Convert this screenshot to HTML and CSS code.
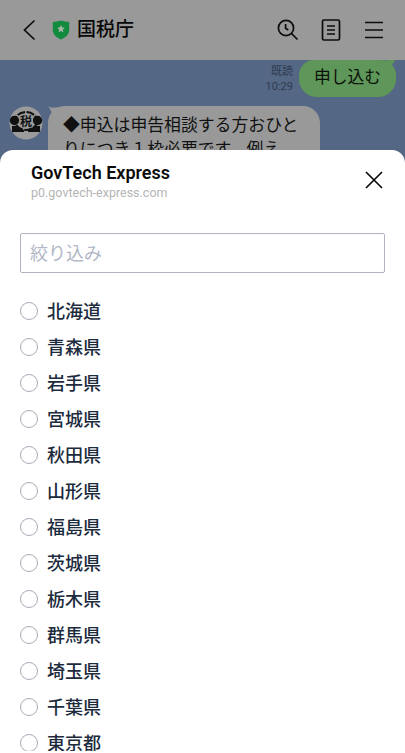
FILE: index.html
```html
<!DOCTYPE html>
<html lang="ja">
<head>
<meta charset="utf-8">
<title>GovTech Express</title>
<link rel="stylesheet" href="styles.css">
</head>
<body>
<div class="app">
  <header class="topbar">
    <svg class="back" width="14" height="22" viewBox="0 0 14 22"><path d="M11.500 1.500 1.500 11l10 9.500"/></svg>
    <svg class="shield" width="18" height="20" viewBox="0 0 18 20"><path class="shield-body" d="M9 .6C6.500 1.500 3.500 2 .8 2v8c0 4.500 3.500 7.500 8.200 9.400 4.700-1.900 8.200-4.900 8.200-9.400V2C14.500 2 11.500 1.500 9 .6z"/><path class="shield-star" d="m9 4.900 1.150 2.500 2.750.3-2.050 1.850.55 2.700L9 10.900l-2.400 1.350.55-2.700L5.100 7.700l2.750-.3z"/></svg>
    <h1 class="title">国税庁</h1>
    <nav class="actions">
      <svg width="22" height="22" viewBox="0 0 22 22"><circle cx="9" cy="9" r="7.600"/><path d="m14.500 14.500 6 6M8.600 5v4.300l2.700 1.700"/></svg>
      <svg width="20" height="22" viewBox="0 0 20 22"><rect x="1.500" y="1" width="17" height="20" rx="1.500"/><path d="M6 7h8M6 11h8M6 15h8"/></svg>
      <svg width="20" height="22" viewBox="0 0 20 22"><path d="M1 3.500h18M1 11h18M1 18.500h18"/></svg>
    </nav>
  </header>
  <main class="chat">
    <div class="sent">
      <div class="meta"><span>既読</span><span>10:29</span></div>
      <div class="bubble-out">申し込む<svg class="out-tail" width="10" height="6" viewBox="0 0 10 6"><path d="M0 0h9C8 3 6 5 4 6z"/></svg></div>
    </div>
    <div class="received">
      <svg class="avatar" width="34" height="34" viewBox="0 0 34 34"><circle class="avatar-bg" cx="17" cy="17" r="16.500"/><ellipse class="ring" cx="17" cy="15" rx="11" ry="9"/><circle cx="5.500" cy="14.500" r="4.700"/><circle cx="28.500" cy="14.500" r="4.700"/><path d="M3 20h5l7 4v2H3zM31 20h-5l-7 4v2h12z"/><circle class="avatar-bg" cx="17" cy="15.500" r="6.900"/><text x="17" y="19.500">税</text></svg>
      <div class="bubble-in"><svg class="in-tail" width="12" height="12" viewBox="0 0 12 12"><path d="M0 0c2 2 5 2 12 1L5 12C4 7 3 4 0 0z"/></svg>◆申込は申告相談する方おひと<br>りにつき１枠必要です。例え</div>
    </div>
  </main>
  <section class="sheet">
    <div class="sheet-head">
      <div>
        <h2>GovTech Express</h2>
        <p>p0.govtech-express.com</p>
      </div>
      <svg class="close" width="18" height="18" viewBox="0 0 18 18"><path d="m1 1 16 16M17 1 1 17"/></svg>
    </div>
    <input class="filter" type="text" placeholder="絞り込み">
    <div class="list">
      <label><i></i><span>北海道</span></label>
      <label><i></i><span>青森県</span></label>
      <label><i></i><span>岩手県</span></label>
      <label><i></i><span>宮城県</span></label>
      <label><i></i><span>秋田県</span></label>
      <label><i></i><span>山形県</span></label>
      <label><i></i><span>福島県</span></label>
      <label><i></i><span>茨城県</span></label>
      <label><i></i><span>栃木県</span></label>
      <label><i></i><span>群馬県</span></label>
      <label><i></i><span>埼玉県</span></label>
      <label><i></i><span>千葉県</span></label>
      <label><i></i><span>東京都</span></label>
    </div>
  </section>
</div>
</body>
</html>
```

FILE: styles.css
```css
* { box-sizing: border-box; }
body {
  margin: 0;
  background: #fff;
  font-family: Roboto, "Noto Sans CJK JP", sans-serif;
}
.app {
  position: relative;
  height: 751px;
  overflow: hidden;
  background: #546785;
}
svg { display: block; flex: none; }
h1, h2, p { margin: 0; }

.topbar {
  display: flex;
  align-items: center;
  height: 60px;
  padding: 0 21px 0 23px;
  background: #999;
}
.back, .actions svg, .close {
  fill: none;
  stroke: #0c0c0c;
  stroke-width: 1.7;
}
.shield { margin-left: 15px; }
.shield-body { fill: #138b3f; }
.shield-star { fill: #a5b8a8; }
.title {
  margin-left: 7px;
  padding-bottom: 1px;
  font-size: 19px;
  line-height: 27px;
  font-weight: 500;
  color: #080808;
}
.actions {
  display: flex;
  gap: 23px;
  margin-left: auto;
}
.actions svg:first-child { margin-right: -1px; }

.chat { height: 100px; }
.sent {
  display: flex;
  justify-content: flex-end;
  height: 37px;
  padding-right: 9px;
}
.meta {
  display: flex;
  flex-direction: column;
  align-items: flex-end;
  margin-right: 6px;
  padding-top: 4px;
  font-size: 11px;
  line-height: 15px;
  color: #303c4e;
}
.bubble-out {
  position: relative;
  width: 97px;
  height: 37px;
  padding-left: 15px;
  border-radius: 15px 15px 18px 18px;
  background: #5f9659;
  font-size: 16.800px;
  line-height: 34px;
  color: #0b120a;
  white-space: nowrap;
}
.out-tail {
  position: absolute;
  top: 0;
  right: 0;
  fill: #5f9659;
}
.received {
  display: flex;
  align-items: flex-start;
  padding: 9px 0 0 9px;
}
.avatar { fill: #111; }
.avatar-bg { fill: #9b9b9b; }
.ring {
  fill: none;
  stroke: #111;
  stroke-width: 2.200;
  stroke-dasharray: 8 1.500;
}
.avatar text {
  font-size: 12px;
  font-weight: 700;
  text-anchor: middle;
}
.bubble-in {
  position: relative;
  width: 272px;
  height: 80px;
  margin-left: 5px;
  padding: 7px 0 0 15px;
  border-radius: 17px;
  background: #999;
  font-size: 16.850px;
  line-height: 24px;
  color: #111;
  white-space: nowrap;
}
.in-tail {
  position: absolute;
  top: 0;
  left: 0;
  fill: #999;
}

.sheet {
  position: absolute;
  inset: 150px 0 0;
  padding: 0 20px;
  border-radius: 13px 13px 0 0;
  background: #fff;
  overflow: hidden;
}
.sheet-head {
  display: flex;
  justify-content: space-between;
  height: 83px;
  padding: 12px 2px 0 11px;
}
.sheet-head h2 {
  font-size: 18px;
  line-height: 22px;
  font-weight: 600;
  color: #0b0b0b;
}
.sheet-head p {
  font-size: 12.500px;
  line-height: 18px;
  color: #b5b5b5;
}
.close { margin-top: 9px; }
.filter {
  display: block;
  width: 365px;
  height: 40px;
  padding: 0 9px 2px;
  border: 1px solid #b1b3c1;
  border-radius: 2px;
  background: #fff;
  font: 18px "Noto Sans CJK JP", sans-serif;
}
.filter::placeholder { color: #b2b7c7; opacity: 1; }
.list { padding-top: 20px; }
.list label {
  display: flex;
  align-items: center;
  gap: 9px;
  height: 36px;
  font-size: 18px;
  font-weight: 500;
  color: #1c2b3d;
}
.list span { padding-bottom: 2px; }
.list i {
  width: 18px;
  height: 18px;
  border: 1px solid #aaabb8;
  border-radius: 50%;
}
```
